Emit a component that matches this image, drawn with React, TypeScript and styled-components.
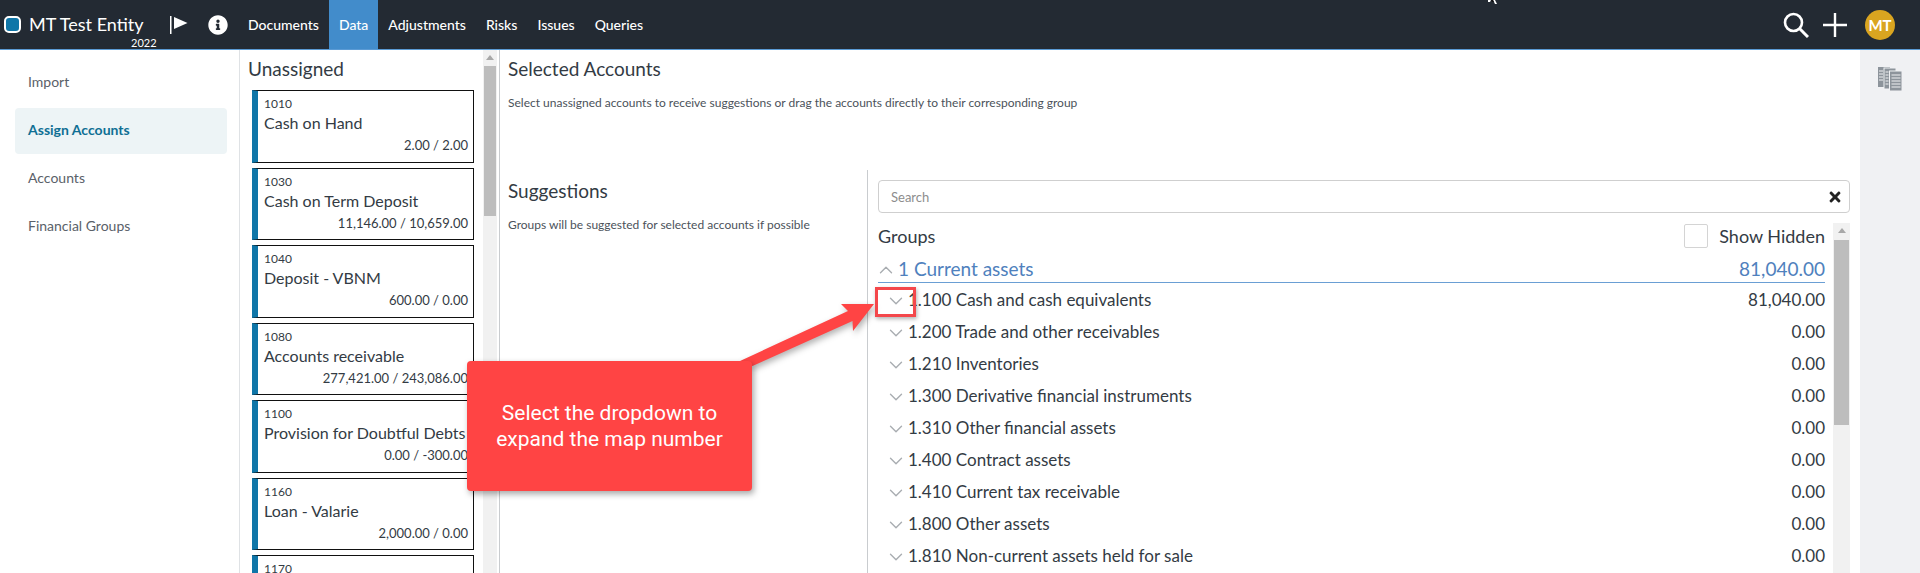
import React from "react";
import styled, { createGlobalStyle } from "styled-components";
import { FaInfoCircle, FaTimes } from "react-icons/fa";
import { ChevronDown, ChevronUp } from "lucide-react";

const GlobalStyle = createGlobalStyle`
  html, body {
    margin: 0;
    padding: 0;
    background: #fff;
    font-family: "Lato", "Liberation Sans", sans-serif;
    color: #333b44;
    overflow: hidden;
  }
  * {
    box-sizing: border-box;
  }
`;

const Page = styled.div`
  position: relative;
  width: 1920px;
  height: 573px;
  overflow: hidden;
  display: flex;
  flex-direction: column;
`;

const TopBar = styled.header`
  height: 50px;
  flex: none;
  background: #232a33;
  border-bottom: 1px solid #5b9bd5;
  display: flex;
  align-items: stretch;
  color: #fff;
`;

const Brand = styled.div`
  position: relative;
  width: 238px;
  display: flex;
  align-items: center;
  padding-left: 4px;
`;

const LogoMark = styled.span`
  width: 17px;
  height: 17px;
  border: 2px solid #fff;
  border-radius: 5px;
  background: #0f76a8;
  margin-right: 8px;
  flex: none;
`;

const EntityName = styled.span`
  font-size: 18px;
  width: 141px;
  flex: none;
  margin-top: -1px;
`;

const EntityYear = styled.span`
  position: absolute;
  left: 131px;
  top: 36px;
  font-size: 11px;
`;

const InfoIcon = styled(FaInfoCircle)`
  margin-left: 20px;
  flex: none;
`;

const NavTabs = styled.nav`
  display: flex;
  align-items: stretch;
`;

const NavTab = styled.a<{ $active?: boolean }>`
  display: flex;
  align-items: center;
  padding: 0 10px;
  font-size: 14px;
  font-weight: 500;
  color: #fff;
  background: ${(p) => (p.$active ? "#428ccb" : "transparent")};
`;

const TopActions = styled.div`
  margin-left: auto;
  display: flex;
  align-items: center;
  gap: 14px;
  padding-right: 25px;
`;

const Avatar = styled.div`
  width: 30px;
  height: 30px;
  margin-left: 4px;
  border-radius: 50%;
  background: #daa520;
  color: #fff;
  font-size: 15px;
  font-weight: 700;
  display: flex;
  align-items: center;
  justify-content: center;
`;

const Body = styled.div`
  flex: 1;
  min-height: 0;
  display: grid;
  grid-template-columns: 240px 260px 1fr 60px;
`;

const SideNav = styled.aside`
  border-right: 1px solid #dfe2e5;
  padding: 8px 12px 0 15px;
  display: flex;
  flex-direction: column;
`;

const SideItem = styled.div<{ $active?: boolean }>`
  height: 46px;
  margin-bottom: 2px;
  padding: 0 0 4px 13px;
  display: flex;
  align-items: center;
  font-size: 14px;
  border-radius: 4px;
  background: ${(p) => (p.$active ? "#edf4f6" : "transparent")};
  color: ${(p) => (p.$active ? "#0f6f94" : "#5a6169")};
  font-weight: ${(p) => (p.$active ? 700 : 400)};
  &:first-child {
    margin-top: 2px;
  }
`;

const UnassignedColumn = styled.section`
  display: flex;
  min-height: 0;
  border-right: 1px solid #c9cccf;
`;

const UnassignedList = styled.div`
  width: 244px;
  flex: none;
  overflow: hidden;
  padding: 6px 0 0 8px;
`;

const SectionTitle = styled.h2`
  margin: 0;
  font-size: 19px;
  font-weight: 400;
  line-height: 26px;
  color: #333b44;
`;

const AccountCard = styled.div`
  width: 222px;
  height: 72.5px;
  margin: 0 0 5px 4px;
  border: 1px solid #111;
  border-left: 6px solid #0f76a8;
  padding: 6px 5px 0 6px;
  &:first-of-type {
    margin-top: 8px;
  }
`;

const AccountCode = styled.div`
  font-size: 12px;
  line-height: 14px;
`;

const AccountName = styled.div`
  font-size: 16px;
  line-height: 24px;
  white-space: nowrap;
`;

const AccountAmount = styled.div`
  font-size: 13px;
  line-height: 20px;
  text-align: right;
`;

const ScrollTrack = styled.div<{ $thumbTop: number; $thumbHeight: number }>`
  position: relative;
  flex: none;
  background: #f1f1f1;
  &::before {
    content: "";
    position: absolute;
    left: 50%;
    top: 5px;
    margin-left: -4px;
    border: 4px solid transparent;
    border-top: 0;
    border-bottom: 5px solid #a8a8a8;
  }
  &::after {
    content: "";
    position: absolute;
    left: 1px;
    right: 1px;
    top: ${(p) => p.$thumbTop}px;
    height: ${(p) => p.$thumbHeight}px;
    background: #bdbdbd;
  }
`;

const ListScroll = styled(ScrollTrack)`
  width: 14px;
  margin-left: -1px;
`;

const Workspace = styled.main`
  min-width: 0;
  display: flex;
  flex-direction: column;
`;

const SelectedPane = styled.section`
  height: 120px;
  flex: none;
  padding: 6px 0 0 8px;
`;

const HelpText = styled.p`
  margin: 13px 0 0;
  font-size: 12px;
  line-height: 16px;
  color: #4b525a;
`;

const LowerPane = styled.div`
  flex: 1;
  min-height: 0;
  display: flex;
`;

const SuggestionsPane = styled.section`
  width: 368px;
  flex: none;
  padding: 8px 0 0 8px;
  border-right: 1px solid #c9cccf;
`;

const GroupsPane = styled.section`
  flex: 1;
  min-width: 0;
  padding: 10px 10px 0 10px;
  overflow: hidden;
`;

const SearchBox = styled.div`
  height: 33px;
  border: 1px solid #cfcfcf;
  border-radius: 4px;
  padding: 0 6px 0 12px;
  display: flex;
  align-items: center;
  justify-content: space-between;
  font-size: 13px;
  color: #8d8d8d;
`;

const GroupsBody = styled.div`
  display: flex;
  margin-top: 10px;
`;

const GroupsList = styled.div`
  flex: 1;
  min-width: 0;
`;

const GroupsHeader = styled.div`
  height: 25px;
  display: flex;
  align-items: center;
  justify-content: space-between;
  font-size: 18px;
`;

const ShowHidden = styled.label`
  display: flex;
  align-items: center;
  gap: 11px;
`;

const Checkbox = styled.span`
  width: 24px;
  height: 24px;
  border: 1px solid #d4d4d4;
  border-radius: 2px;
`;

const TopGroup = styled.div`
  height: 35px;
  display: flex;
  align-items: center;
  justify-content: space-between;
  color: #4f81bd;
  font-size: 19px;
  border-bottom: 1px solid #6a9fd4;
  padding-top: 7px;
`;

const GroupLabel = styled.span`
  display: flex;
  align-items: center;
`;

const GroupRow = styled.div`
  height: 32px;
  display: flex;
  align-items: center;
  justify-content: space-between;
  font-size: 17px;
  padding-left: 7px;
`;

const Chevron = styled(ChevronDown)`
  color: #a9adb1;
  margin: 3px 1px 0 0;
  flex: none;
`;

const ChevronOpen = styled(ChevronUp)`
  color: #a9adb1;
  margin: 2px 1px 0 -3px;
  flex: none;
`;

const GroupsScroll = styled(ScrollTrack)`
  width: 17px;
  margin-left: 8px;
  height: 400px;
`;

const RightRail = styled.aside`
  background: #f0f1f3;
  display: flex;
  justify-content: center;
  padding-top: 17px;
`;

/* annotation layer painted over the screenshot */
const Callout = styled.div`
  position: absolute;
  left: 467px;
  top: 361px;
  width: 285px;
  height: 130px;
  background: #ff4444;
  border-radius: 4px;
  box-shadow: 2px 3px 6px rgba(0, 0, 0, 0.35);
  color: #fff;
  font-family: "Roboto", "Liberation Sans", sans-serif;
  font-size: 21px;
  line-height: 26px;
  text-align: center;
  display: flex;
  align-items: center;
  justify-content: center;
`;

const HighlightBox = styled.div`
  position: absolute;
  left: 875px;
  top: 287px;
  width: 41px;
  height: 30px;
  border: 3px solid #f4474b;
  box-shadow: 1px 2px 4px rgba(0, 0, 0, 0.3);
`;

const ArrowLayer = styled.svg`
  position: absolute;
  left: 730px;
  top: 295px;
  filter: drop-shadow(2px 3px 3px rgba(0, 0, 0, 0.3));
`;

const CursorMark = styled.svg`
  position: absolute;
  left: 1488px;
  top: 0;
`;

const accounts = [
  { code: "1010", name: "Cash on Hand", amount: "2.00 / 2.00" },
  { code: "1030", name: "Cash on Term Deposit", amount: "11,146.00 / 10,659.00" },
  { code: "1040", name: "Deposit - VBNM", amount: "600.00 / 0.00" },
  { code: "1080", name: "Accounts receivable", amount: "277,421.00 / 243,086.00" },
  { code: "1100", name: "Provision for Doubtful Debts", amount: "0.00 / -300.00" },
  { code: "1160", name: "Loan - Valarie", amount: "2,000.00 / 0.00" },
  { code: "1170", name: "", amount: "" },
];

const groups = [
  { name: "1.100 Cash and cash equivalents", value: "81,040.00" },
  { name: "1.200 Trade and other receivables", value: "0.00" },
  { name: "1.210 Inventories", value: "0.00" },
  { name: "1.300 Derivative financial instruments", value: "0.00" },
  { name: "1.310 Other financial assets", value: "0.00" },
  { name: "1.400 Contract assets", value: "0.00" },
  { name: "1.410 Current tax receivable", value: "0.00" },
  { name: "1.800 Other assets", value: "0.00" },
  { name: "1.810 Non-current assets held for sale", value: "0.00" },
];

const navItems = ["Documents", "Data", "Adjustments", "Risks", "Issues", "Queries"];
const sideItems = ["Import", "Assign Accounts", "Accounts", "Financial Groups"];

const FlagIcon = () => (
  <svg width="18" height="20" viewBox="0 0 18 20" fill="#fff">
    <rect x="0" y="1" width="1.5" height="18" />
    <path d="M4 2 L17.5 8 L4 14 Z" />
  </svg>
);

const SearchIcon = () => (
  <svg width="26" height="26" viewBox="0 0 26 26" fill="none" stroke="#fff">
    <circle cx="10.5" cy="10.5" r="8.5" strokeWidth="2.6" />
    <path d="M16.5 16.5 L25 25" strokeWidth="3" />
  </svg>
);

const PlusIcon = () => (
  <svg width="24" height="24" viewBox="0 0 24 24" stroke="#fff" strokeWidth="2.4">
    <path d="M12 0 V24 M0 12 H24" />
  </svg>
);

const PagesIcon = () => (
  <svg width="24" height="24" viewBox="0 0 24 24">
    <rect x="0" y="0" width="12" height="20" fill="#8d949b" />
    <rect x="6" y="1" width="12" height="21" fill="#8d949b" stroke="#f0f1f3" strokeWidth="1" />
    <rect x="11.5" y="4" width="12.5" height="20" fill="#8d949b" stroke="#f0f1f3" strokeWidth="1" />
    <path
      d="M13.5 8 H22.5 M13.5 11 H22.5 M13.5 14 H22.5 M13.5 17 H22.5 M13.5 20 H22.5 M1 4 H5 M1 7 H5 M1 10 H5 M1 13 H5 M7.5 5 H10.5 M7.5 8 H10.5 M7.5 11 H10.5 M7.5 14 H10.5 M7.5 17 H10.5"
      stroke="#f0f1f3"
      strokeWidth="1"
    />
  </svg>
);

export default function App() {
  return (
    <Page>
      <GlobalStyle />
      <TopBar>
        <Brand>
          <LogoMark />
          <EntityName>MT Test Entity</EntityName>
          <EntityYear>2022</EntityYear>
          <FlagIcon />
          <InfoIcon size={20} color="#fff" />
        </Brand>
        <NavTabs>
          {navItems.map((item) => (
            <NavTab key={item} $active={item === "Data"}>
              {item}
            </NavTab>
          ))}
        </NavTabs>
        <TopActions>
          <SearchIcon />
          <PlusIcon />
          <Avatar>MT</Avatar>
        </TopActions>
      </TopBar>
      <Body>
        <SideNav>
          {sideItems.map((item) => (
            <SideItem key={item} $active={item === "Assign Accounts"}>
              {item}
            </SideItem>
          ))}
        </SideNav>
        <UnassignedColumn>
          <UnassignedList>
            <SectionTitle>Unassigned</SectionTitle>
            {accounts.map((a) => (
              <AccountCard key={a.code}>
                <AccountCode>{a.code}</AccountCode>
                <AccountName>{a.name}</AccountName>
                <AccountAmount>{a.amount}</AccountAmount>
              </AccountCard>
            ))}
          </UnassignedList>
          <ListScroll $thumbTop={16} $thumbHeight={150} />
        </UnassignedColumn>
        <Workspace>
          <SelectedPane>
            <SectionTitle>Selected Accounts</SectionTitle>
            <HelpText>
              Select unassigned accounts to receive suggestions or drag the accounts directly to
              their corresponding group
            </HelpText>
          </SelectedPane>
          <LowerPane>
            <SuggestionsPane>
              <SectionTitle>Suggestions</SectionTitle>
              <HelpText>Groups will be suggested for selected accounts if possible</HelpText>
            </SuggestionsPane>
            <GroupsPane>
              <SearchBox>
                Search
                <FaTimes size={16} color="#222" />
              </SearchBox>
              <GroupsBody>
                <GroupsList>
                  <GroupsHeader>
                    <span>Groups</span>
                    <ShowHidden>
                      <Checkbox />
                      Show Hidden
                    </ShowHidden>
                  </GroupsHeader>
                  <TopGroup>
                    <GroupLabel>
                      <ChevronOpen size={22} strokeWidth={1.5} />1 Current assets
                    </GroupLabel>
                    <span>81,040.00</span>
                  </TopGroup>
                  {groups.map((g) => (
                    <GroupRow key={g.name}>
                      <GroupLabel>
                        <Chevron size={22} strokeWidth={1.5} />
                        {g.name}
                      </GroupLabel>
                      <span>{g.value}</span>
                    </GroupRow>
                  ))}
                </GroupsList>
                <GroupsScroll $thumbTop={17} $thumbHeight={185} />
              </GroupsBody>
            </GroupsPane>
          </LowerPane>
        </Workspace>
        <RightRail>
          <PagesIcon />
        </RightRail>
      </Body>
      <ArrowLayer width="150" height="75" viewBox="0 0 150 75">
        <path d="M10 66 L118 16 L111 9 L144 9 L123 36 L122.5 26 L22.5 71 Z" fill="#ff4444" />
      </ArrowLayer>
      <Callout>
        Select the dropdown to
        <br />
        expand the map number
      </Callout>
      <HighlightBox />
      <CursorMark width="9" height="4" viewBox="0 0 9 4">
        <path d="M0 0 H3 L2 2 H0 Z" fill="#fff" />
        <path d="M5 0 H7 L9 4 H7 Z" fill="#fff" />
        <path d="M3 0 H5 L6 2 H4 Z" fill="#111" />
      </CursorMark>
    </Page>
  );
}
